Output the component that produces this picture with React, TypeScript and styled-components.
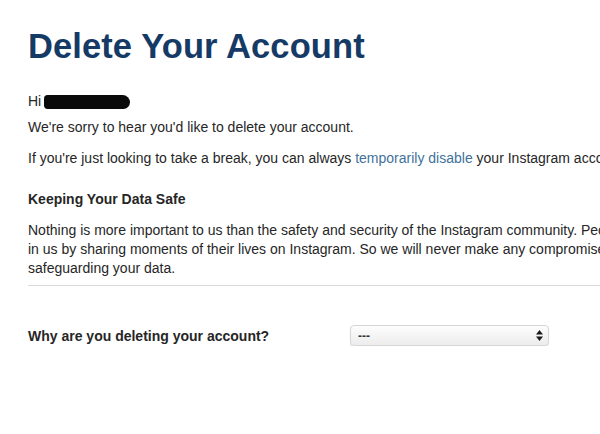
import React from "react";
import styled, { createGlobalStyle } from "styled-components";

const GlobalStyle = createGlobalStyle`
  html, body {
    margin: 0;
    padding: 0;
    background: #ffffff;
    overflow: hidden;
  }
  body {
    font-family: "Liberation Sans", Arial, Helvetica, sans-serif;
    color: #262626;
    -webkit-font-smoothing: antialiased;
  }
`;

const Page = styled.div`
  width: 720px;
  padding: 26px 0 0 28px;
`;

const Title = styled.h1`
  margin: 0 0 26px;
  font-size: 34.5px;
  line-height: 40px;
  font-weight: 700;
  color: #163a66;
  letter-spacing: 0.1px;
`;

const Text = styled.p<{ gap?: number }>`
  margin: 0 0 ${({ gap }) => gap ?? 12}px;
  font-size: 14px;
  line-height: 19px;
  color: #262626;
`;

const Redacted = styled.span`
  display: inline-block;
  vertical-align: middle;
  width: 86px;
  height: 14px;
  margin-left: -1px;
  background: #0a0a0a;
  border-radius: 5px 10px 9px 5px;
  filter: blur(0.6px);
`;

const Link = styled.a`
  color: #3f729b;
  text-decoration: none;
`;

const SectionTitle = styled.h2`
  margin: 22px 0 12px;
  font-size: 14px;
  line-height: 19px;
  font-weight: 700;
  color: #262626;
`;

const Divider = styled.hr`
  margin: 7px 0 0;
  border: none;
  border-top: 1px solid #dbdbdb;
`;

const QuestionRow = styled.div`
  display: grid;
  grid-template-columns: 322px 199px;
  align-items: center;
  margin-top: 39px;
`;

const Label = styled.label`
  font-size: 14px;
  font-weight: 700;
  color: #262626;
`;

const SelectWrap = styled.div`
  position: relative;
  height: 21px;
`;

const Select = styled.select`
  appearance: none;
  -webkit-appearance: none;
  width: 100%;
  height: 21px;
  padding: 0 0 0 7px;
  border: 1px solid #d6d6d6;
  border-radius: 4px;
  background: linear-gradient(#fdfdfd, #ececec);
  box-shadow: 0 1px 1px rgba(0, 0, 0, 0.12);
  font-family: "Liberation Sans", Arial, sans-serif;
  font-size: 12px;
  font-weight: 700;
  color: #333;
  outline: none;
`;

const Arrows = styled.svg`
  position: absolute;
  right: 6px;
  top: 5px;
  pointer-events: none;
`;

export default function App() {
  return (
    <>
      <GlobalStyle />
      <Page>
        <Title>Delete Your Account</Title>
        <Text gap={7}>
          Hi <Redacted />
        </Text>
        <Text>We're sorry to hear you'd like to delete your account.</Text>
        <Text gap={0}>
          If you're just looking to take a break, you can always{" "}
          <Link href="#">temporarily disable</Link> your Instagram account instead.
        </Text>
        <SectionTitle>Keeping Your Data Safe</SectionTitle>
        <Text gap={0}>
          Nothing is more important to us than the safety and security of the Instagram
          community. People put their trust
          <br />
          in us by sharing moments of their lives on Instagram. So we will never make any
          compromises when it comes to
          <br />
          safeguarding your data.
        </Text>
        <Divider />
        <QuestionRow>
          <Label htmlFor="reason">Why are you deleting your account?</Label>
          <SelectWrap>
            <Select id="reason" defaultValue="">
              <option value="">---</option>
            </Select>
            <Arrows width="7" height="11" viewBox="0 0 7 11">
              <path d="M3.5 0 L7 4.5 L0 4.5 Z" fill="#1a1a1a" />
              <path d="M0 6.5 L7 6.5 L3.5 11 Z" fill="#1a1a1a" />
            </Arrows>
          </SelectWrap>
        </QuestionRow>
      </Page>
    </>
  );
}
